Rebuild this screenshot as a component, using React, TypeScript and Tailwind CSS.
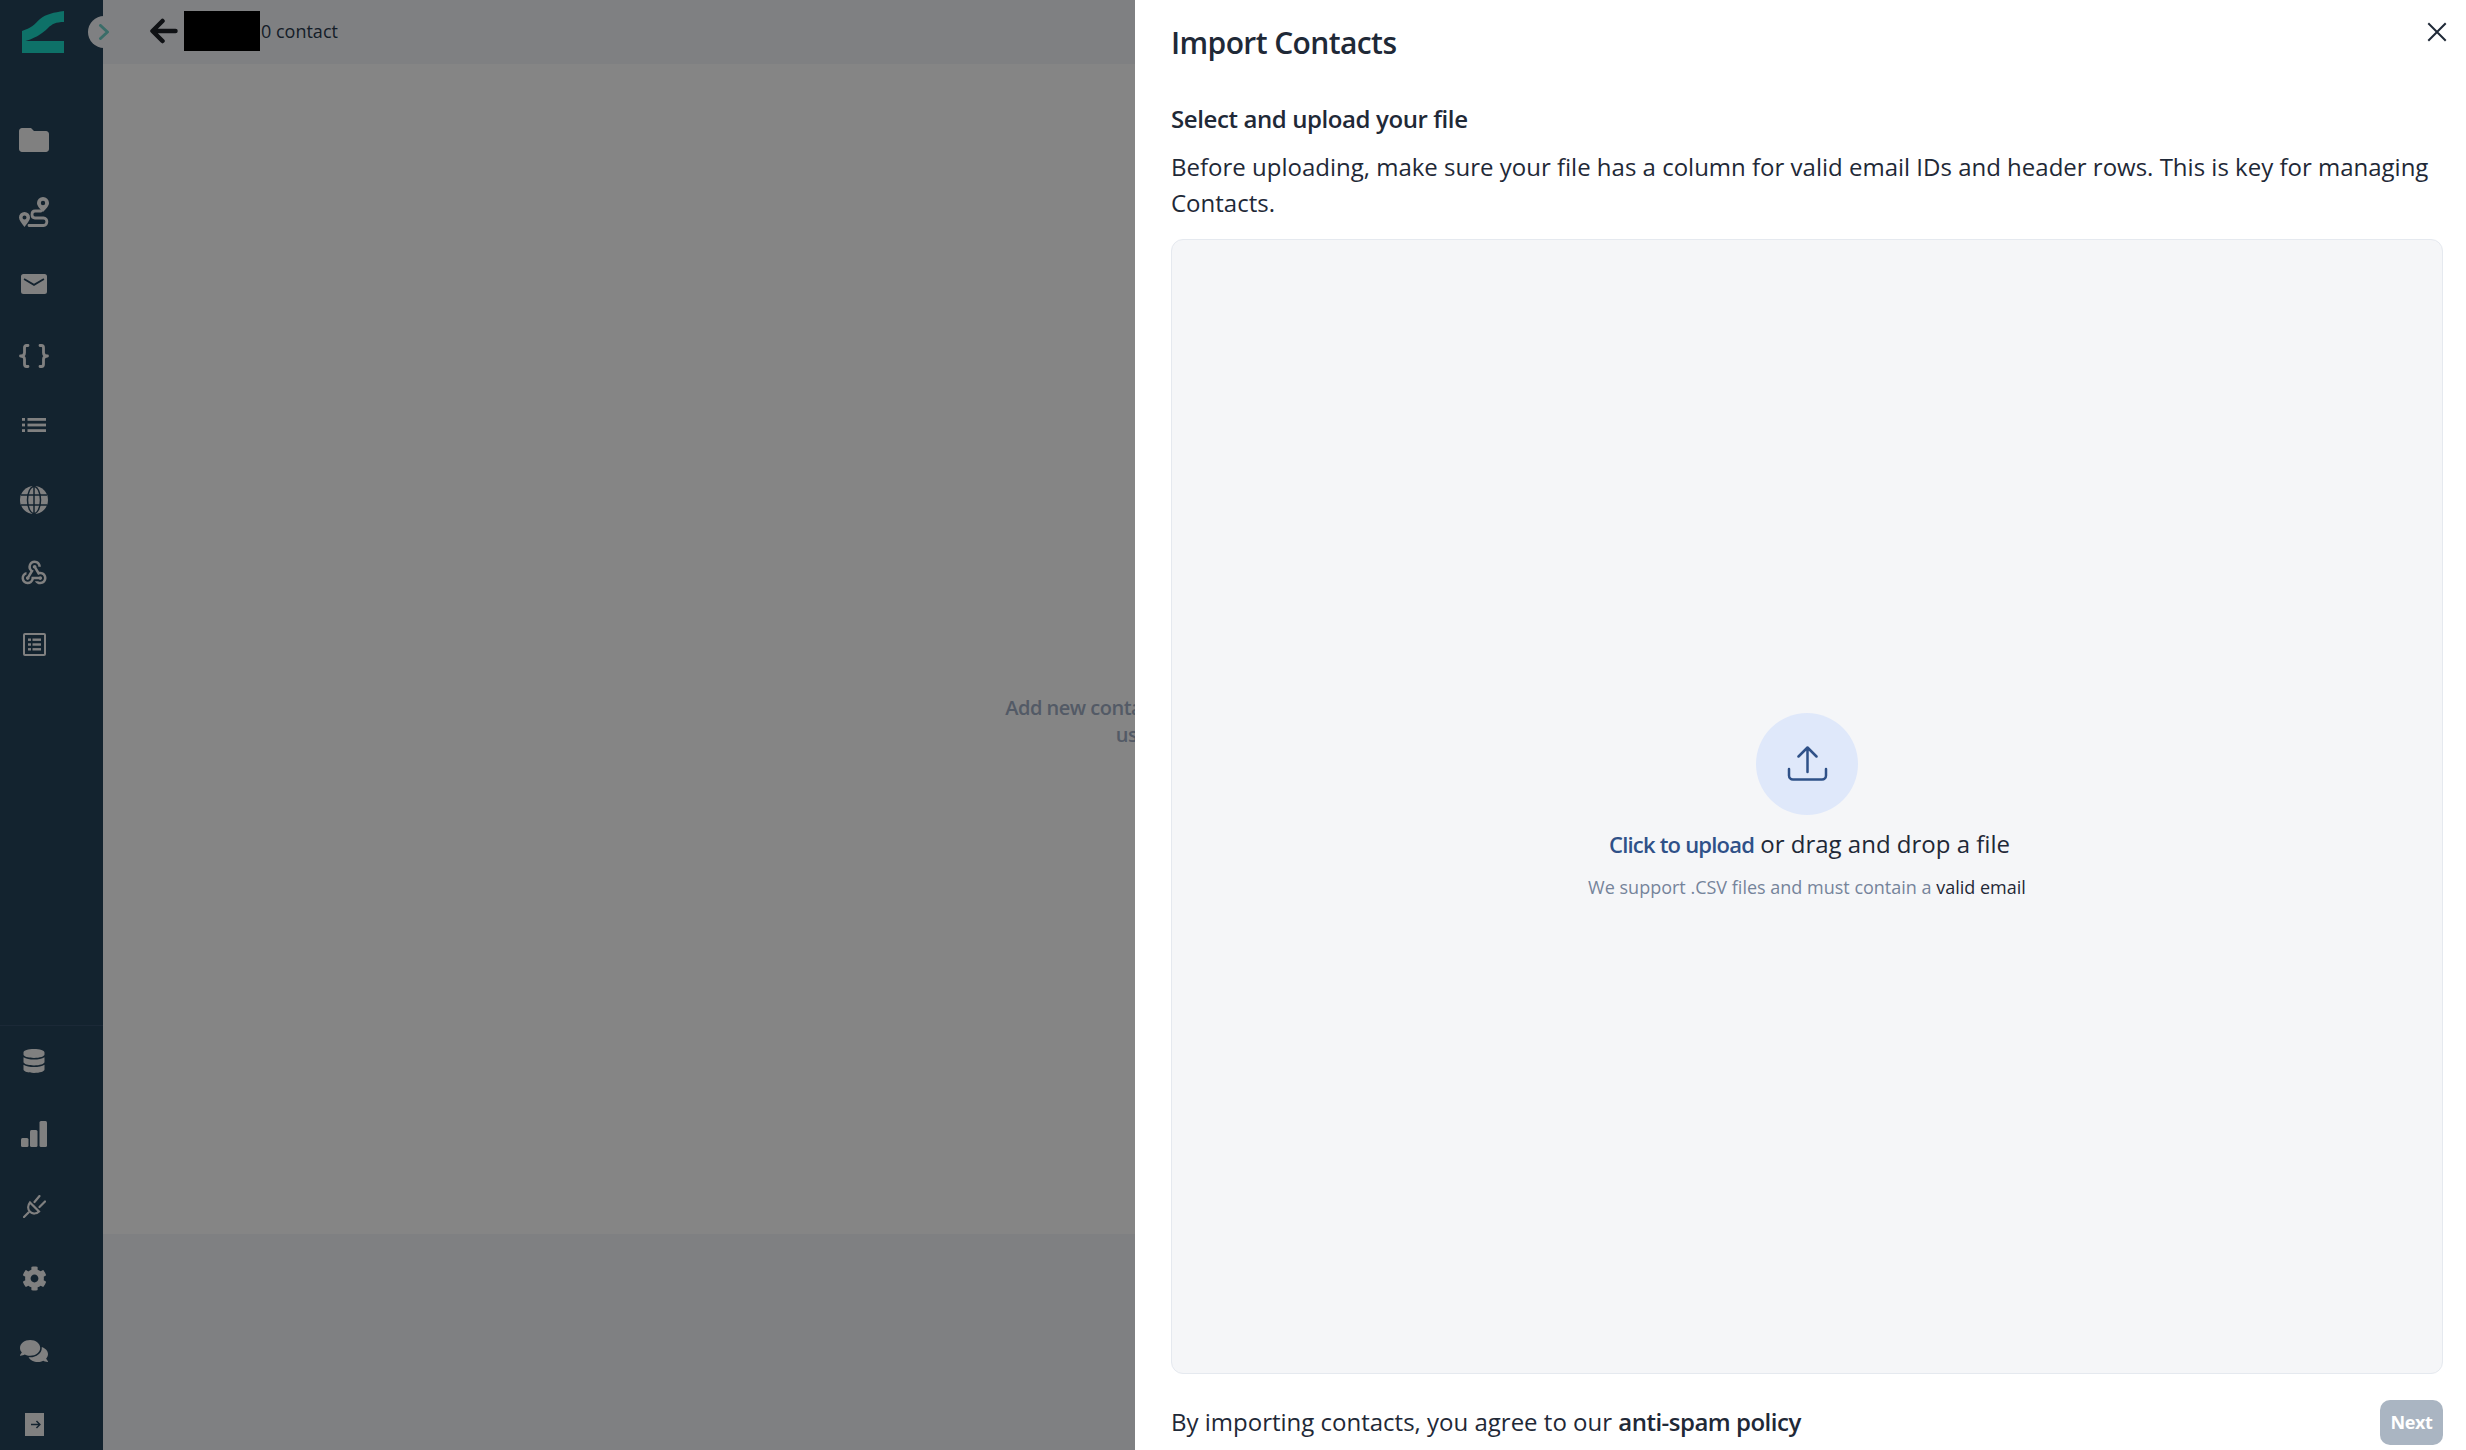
import React from "react";
import { MdFolder, MdWebhook } from "react-icons/md";
import { FaDatabase, FaCog, FaComments } from "react-icons/fa";

function RouteIcon() {
  return (
    <svg width="30" height="30" viewBox="0 0 30 30" fill="none">
      <path fillRule="evenodd" clipRule="evenodd" d="M24 0a6 6 0 0 1 6 6c0 3-3.500 6.500-6 9-2.500-2.500-6-6-6-9a6 6 0 0 1 6-6zm0 3.800a2.200 2.200 0 1 0 0 4.400 2.200 2.200 0 0 0 0-4.400z" fill="currentColor" />
      <path fillRule="evenodd" clipRule="evenodd" d="M5.500 15a5.500 5.500 0 0 1 5.500 5.500c0 2.800-3 6-5.500 9.500C3 26.500 0 23.300 0 20.500A5.500 5.500 0 0 1 5.500 15zm0 3.500a2 2 0 1 0 0 4 2 2 0 0 0 0-4z" fill="currentColor" />
      <path d="M22 14h-6c-4 0-4 7 0 7h8.500c4.500 0 4.500 7.500 0 7.500H10" stroke="currentColor" strokeWidth="2.800" strokeLinecap="round" />
    </svg>
  );
}
function MailIcon() {
  return (
    <svg width="26" height="20" viewBox="0 0 26 20">
      <path fillRule="evenodd" d="M2.500 0h21A2.500 2.500 0 0 1 26 2.500v15a2.500 2.500 0 0 1-2.500 2.500h-21A2.500 2.500 0 0 1 0 17.500v-15A2.500 2.500 0 0 1 2.500 0zM3.500 4.200l-.9 1.500L13 12l10.400-6.300-.9-1.500L13 9.800z" fill="currentColor" />
    </svg>
  );
}
function BracesIcon() {
  return (
    <svg width="30" height="24" viewBox="0 0 30 24" fill="none" stroke="currentColor" strokeWidth="2.800" strokeLinecap="round" strokeLinejoin="round">
      <path d="M9 1.500H7.500C6 1.500 5.500 2.500 5.500 3.700v5c0 2-1.500 3.300-4 3.300 2.500 0 4 1.300 4 3.300v5c0 1.200.5 2.200 2 2.200H9" />
      <path d="M21 1.500h1.500c1.500 0 2 1 2 2.200v5c0 2 1.500 3.300 4 3.300-2.500 0-4 1.300-4 3.300v5c0 1.200-.5 2.200-2 2.200H21" />
    </svg>
  );
}
function ListIcon() {
  return (
    <svg width="24" height="14" viewBox="0 0 24 14" fill="currentColor">
      <rect x="0" y="0" width="3" height="2.800" />
      <rect x="5.500" y="0" width="18.500" height="2.800" />
      <rect x="0" y="5.600" width="3" height="2.800" />
      <rect x="5.500" y="5.600" width="18.500" height="2.800" />
      <rect x="0" y="11.200" width="3" height="2.800" />
      <rect x="5.500" y="11.200" width="18.500" height="2.800" />
    </svg>
  );
}
function GlobeIcon() {
  return (
    <svg width="28" height="28" viewBox="0 0 28 28">
      <circle cx="14" cy="14" r="14" fill="currentColor" />
      <g fill="none" stroke="#26435a" strokeWidth="1.500">
        <ellipse cx="14" cy="14" rx="6.500" ry="13.500" />
        <path d="M14 0v28M1 9h26M1 19h26" />
      </g>
    </svg>
  );
}
function TableIcon() {
  return (
    <svg width="23" height="23" viewBox="0 0 23 23" fill="none">
      <rect x="1" y="1" width="21" height="21" rx="1" stroke="currentColor" strokeWidth="2" />
      <g fill="currentColor">
        <rect x="5" y="5.500" width="3" height="2.400" />
        <rect x="9.500" y="5.500" width="8.500" height="2.400" />
        <rect x="5" y="10.300" width="3" height="2.400" />
        <rect x="9.500" y="10.300" width="8.500" height="2.400" />
        <rect x="5" y="15.100" width="3" height="2.400" />
        <rect x="9.500" y="15.100" width="8.500" height="2.400" />
      </g>
    </svg>
  );
}
function BarsIcon() {
  return (
    <svg width="26" height="26" viewBox="0 0 26 26" fill="currentColor">
      <rect x="0" y="17" width="7.500" height="9" rx="1.500" />
      <rect x="9" y="9" width="7.500" height="17" rx="1.500" />
      <rect x="18.500" y="0" width="7.500" height="26" rx="1.500" />
    </svg>
  );
}
function PlugIcon() {
  return (
    <svg width="23" height="23" viewBox="0 0 23 23" fill="none" stroke="currentColor" strokeWidth="2.200" strokeLinecap="round">
      <path d="M7 7.500L16 16.500c-2.500 2.500-6.500 2.800-9 .3s-2.400-6.300 0-9.300z" />
      <path d="M5.500 17.500L1 22" />
      <path d="M16.500 1L11.500 7M22 6.500l-5.500 5.500" />
    </svg>
  );
}
function LogoutIcon() {
  return (
    <svg width="19" height="23" viewBox="0 0 19 23">
      <path fillRule="evenodd" d="M0 0h19v23H0zM6 10.700v1.600h7.200l-2.300 2.300 1.100 1 3.900-4.100-3.900-4.100-1.100 1.100 2.300 2.200z" fill="currentColor" />
    </svg>
  );
}
function Logo() {
  return (
    <svg width="42" height="42" viewBox="0 0 42 42">
      <path d="M0 20C9 17 12 14 18 8 24 3 32 1.500 42 0v11C34 11 30 13 26 17c-6 6-14 11-26 14z" fill="#1bd8c8" />
      <rect x="0" y="30" width="42" height="12" fill="#1bd8c8" />
    </svg>
  );
}

const top = [
  { icon: <MdFolder size={36} />, cls: "" },
  { icon: <RouteIcon />, cls: "" },
  { icon: <MailIcon />, cls: "" },
  { icon: <BracesIcon />, cls: "" },
  { icon: <ListIcon />, cls: "pb-[6px]" },
  { icon: <GlobeIcon />, cls: "" },
  { icon: <MdWebhook size={30} />, cls: "pt-[2px]" },
  { icon: <TableIcon />, cls: "" },
];
const bottom = [
  <FaDatabase size={24} />,
  <BarsIcon />,
  <PlugIcon />,
  <FaCog size={25} />,
  <FaComments size={28} />,
  <LogoutIcon />,
];

export default function App() {
  return (
    <div className="relative flex h-[1450px] w-[2466px] overflow-hidden bg-white font-['Open_Sans',sans-serif]">
      <aside className="flex w-[103px] shrink-0 flex-col bg-[#26435a] text-[#f6f6f6]">
        <div className="flex h-[104px] items-start pl-[22px] pt-[11px]">
          <Logo />
        </div>
        <nav className="flex flex-col">
          {top.map((item, i) => (
            <div key={i} className={`flex h-[72px] w-[68px] items-center justify-center ${item.cls}`}>
              {item.icon}
            </div>
          ))}
        </nav>
        <div className="mt-auto flex flex-col gap-[28.600px] border-t border-[#34506a] pb-[4px] pt-[13px]">
          {bottom.map((icon, i) => (
            <div key={i} className="flex h-[44px] w-[68px] items-center justify-center">
              {icon}
            </div>
          ))}
        </div>
      </aside>

      <main className="flex flex-1 flex-col">
        <header className="flex h-[64px] items-center bg-[#f4f6fa] pb-[2px] pl-[47px]">
          <svg width="28" height="26" viewBox="0 0 28 26" fill="none" stroke="#1e2128" strokeWidth="4.500" strokeLinecap="round" strokeLinejoin="round">
            <path d="M25.500 13H3M12.500 3L2.500 13l10 10" />
          </svg>
          <div className="ml-[6px] h-[40px] w-[76px] bg-black" />
          <span className="ml-[1px] text-[18px] text-[#2a3a4e]">0 contact</span>
        </header>
        <section className="flex flex-1 flex-col items-center pt-[630px]">
          <p className="text-center text-[20px] font-semibold leading-[27px] tracking-[-0.5px] text-[#a0adc3]">
            Add new contacts to the list by entering them manually or by
            <br />
            using the import contact option here
          </p>
        </section>
        <footer className="h-[216px] bg-[#f4f6fa]" />
      </main>

      <button className="absolute left-[88px] top-[16px] flex h-[32px] w-[32px] items-center justify-center rounded-full bg-[#f4f6fa] text-[#70d0c8]">
        <svg width="12" height="16" viewBox="0 0 12 16" fill="none" stroke="currentColor" strokeWidth="3" strokeLinecap="round" strokeLinejoin="round">
          <path d="M2.500 1.500L9.500 8l-7 6.500" />
        </svg>
      </button>

      <div className="absolute inset-0 bg-black/[0.48]" />

      <div className="absolute bottom-0 right-0 top-0 flex w-[1331px] flex-col bg-white pl-[36px] pr-[23px] text-[#1f2937]">
        <div className="flex items-start justify-between pt-[20px]">
          <h2 className="text-[30px] font-semibold leading-[46px] tracking-[-0.6px]">Import Contacts</h2>
          <svg className="mr-[-4px] mt-[2px]" width="20" height="20" viewBox="0 0 20 20" fill="none" stroke="currentColor" strokeWidth="2" strokeLinecap="square">
            <path d="M2 2l16 16M18 2L2 18" />
          </svg>
        </div>
        <h3 className="mt-[35px] text-[24px] font-semibold leading-[36px] tracking-[-0.4px]">Select and upload your file</h3>
        <p className="mt-[12px] text-[24px] leading-[36px]">
          Before uploading, make sure your file has a column for valid email IDs and header rows. This is key for managing Contacts.
        </p>
        <div className="mt-[18px] flex h-[1135px] flex-col items-center rounded-[12px] border border-[#e5e9ef] bg-[#f5f6f8] pt-[473px]">
          <div className="flex h-[102px] w-[102px] items-center justify-center rounded-full bg-[#dfe8fa]">
            <svg width="41" height="36" viewBox="0 0 41 36" fill="none" stroke="#2f5188" strokeWidth="2.500" strokeLinecap="round" strokeLinejoin="round">
              <path d="M20.500 26V2M11.500 10.500L20.500 1.500l9 9" />
              <path d="M2 23v6.500a4 4 0 0 0 4 4h29a4 4 0 0 0 4-4V23" />
            </svg>
          </div>
          <p className="ml-[5px] mt-[11px] text-[24px] leading-[36px]">
            <span className="text-[22px] font-semibold tracking-[-0.8px] text-[#2f5188]">Click to upload</span> or drag and drop a file
          </p>
          <p className="mt-[12px] text-[18px] leading-[26px] text-[#75849b]">
            We support .CSV files and must contain a <span className="text-[#1f2937]">valid email</span>
          </p>
        </div>
        <div className="flex flex-1 items-center justify-between pt-[20px]">
          <p className="text-[24px] leading-[36px]">
            By importing contacts, you agree to our <span className="font-semibold tracking-[-0.5px]">anti-spam policy</span>
          </p>
          <button className="h-[45px] w-[63px] rounded-[10px] bg-[#aab5c2] text-[18px] font-bold tracking-[-0.4px] text-white">Next</button>
        </div>
      </div>
    </div>
  );
}
